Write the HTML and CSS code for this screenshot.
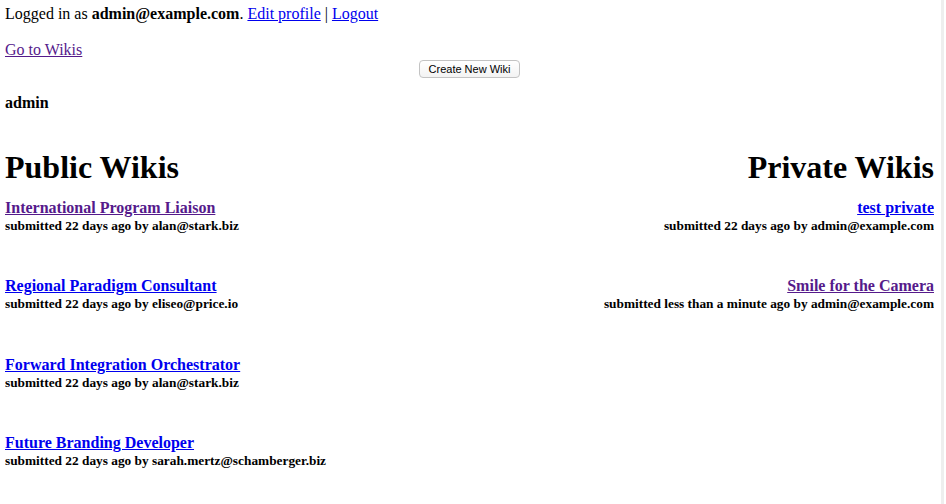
FILE: index.html
```html
<!DOCTYPE html>
<html>
<head>
<meta charset="utf-8">
<title>Wikis</title>
<link rel="stylesheet" href="styles.css">
</head>
<body>
<div class="topline">Logged in as <b>admin@example.com</b>. <a href="#">Edit profile</a> | <a href="#">Logout</a></div>
<p class="goto"><a class="visited" href="#">Go to Wikis</a></p>
<div class="create"><button class="create-btn">Create New Wiki</button></div>
<div class="username">admin</div>
<div class="cols">
  <div class="col col-left">
    <h1 class="col-title">Public Wikis</h1>
    <div class="item"><a class="item-title visited" href="#">International Program Liaison</a><div class="item-meta">submitted 22 days ago by alan@stark.biz</div></div>
    <div class="item"><a class="item-title" href="#">Regional Paradigm Consultant</a><div class="item-meta">submitted 22 days ago by eliseo@price.io</div></div>
    <div class="item"><a class="item-title" href="#">Forward Integration Orchestrator</a><div class="item-meta">submitted 22 days ago by alan@stark.biz</div></div>
    <div class="item"><a class="item-title" href="#">Future Branding Developer</a><div class="item-meta">submitted 22 days ago by sarah.mertz@schamberger.biz</div></div>
  </div>
  <div class="col col-right">
    <h1 class="col-title">Private Wikis</h1>
    <div class="item"><a class="item-title" href="#">test private</a><div class="item-meta">submitted 22 days ago by admin@example.com</div></div>
    <div class="item"><a class="item-title visited" href="#">Smile for the Camera</a><div class="item-meta">submitted less than a minute ago by admin@example.com</div></div>
  </div>
</div>
</body>
</html>
```
FILE: styles.css
```css
html {
  background: #ffffff;
}
body {
  margin: 5px 12px 0 5px;
  font-family: "Liberation Serif", "Times New Roman", serif;
  font-size: 16px;
  color: #000;
}
body::after {
  content: "";
  position: fixed;
  top: 0;
  bottom: 0;
  left: 941px;
  width: 3px;
  background: #eeeeee;
}
a {
  color: #0000ee;
}
a.visited {
  color: #551a8b;
}
.topline {
  line-height: 18px;
}
.goto {
  margin: 18px 0 0;
  line-height: 18px;
}
.create {
  text-align: center;
  margin-top: 1px;
  line-height: 18px;
}
.create-btn {
  font-family: "Liberation Sans", Arial, sans-serif;
  font-size: 11px;
  height: 18px;
  padding: 0 9px;
  border: 1px solid #c3c3c3;
  border-radius: 4px;
  background: linear-gradient(#ffffff, #f3f3f3);
  color: #000;
  vertical-align: top;
}
.username {
  font-weight: bold;
  margin-top: 16px;
  line-height: 18px;
}
.cols {
  display: flex;
  justify-content: space-between;
  margin-top: 37px;
}
.col-right {
  text-align: right;
}
.col-title {
  font-size: 32px;
  margin: 0 0 13px;
  line-height: 37px;
}
.item {
  margin-bottom: 42.33px;
}
.item-title {
  font-weight: bold;
  font-size: 16px;
  line-height: 18px;
}
.item-meta {
  font-weight: bold;
  font-size: 13.33px;
  line-height: 18px;
}
```
